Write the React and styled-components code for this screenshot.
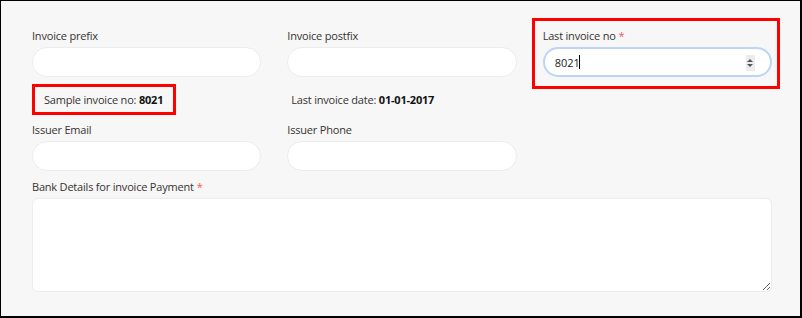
import React from "react";
import styled, { createGlobalStyle } from "styled-components";

const Global = createGlobalStyle`
  html, body { margin: 0; padding: 0; background: #ffffff; }
  * { box-sizing: border-box; }
`;

const Frame = styled.div`
  width: 802px;
  height: 318px;
  border: 1px solid #000;
  border-right-width: 2px;
  border-bottom-width: 2px;
  background: #f7f7f7;
  padding: 28px 0 0 31px;
  font-family: "Open Sans", "Noto Sans", sans-serif;
  font-size: 11px;
  color: #3b3b3b;
`;

const Form = styled.div`
  width: 740px;
  display: flex;
  flex-direction: column;
`;

const Row = styled.div`
  display: grid;
  grid-template-columns: repeat(3, 1fr);
  column-gap: 26px;
  margin-top: ${(p) => p.$top || 0}px;
`;

const Field = styled.div`
  position: relative;
  display: flex;
  flex-direction: column;
  gap: 4px;
  ${(p) =>
    p.$marked &&
    `
    &::after {
      content: "";
      position: absolute;
      top: -11px;
      left: -11px;
      right: -8px;
      bottom: -12px;
      border: 3px solid #ff0000;
      pointer-events: none;
    }
  `}
`;

const Label = styled.label`
  display: block;
  height: 14px;
  line-height: 14px;
  font-size: 11px;
  letter-spacing: -0.2px;
  color: #36332f;
  white-space: nowrap;
`;

const Req = styled.span`
  color: #f25a5a;
  margin-left: 3px;
`;

const TextInput = styled.input`
  width: 100%;
  height: 30px;
  border: 1px solid #ececec;
  border-radius: 15px;
  background: #fff;
  outline: none;
  padding: 0 14px;
  font-family: inherit;
  font-size: 11px;
  color: #222;
  ${(p) =>
    p.$focused &&
    `
    border: 2px solid #bcd4f6;
    padding: 0 10px;
  `}
`;

const InputWrap = styled.div`
  position: relative;
  height: 30px;
`;

const Caret = styled.span`
  position: absolute;
  left: 36px;
  top: 8px;
  width: 1px;
  height: 14px;
  background: #000;
`;

const Spinner = styled.span`
  position: absolute;
  right: 17px;
  top: 8px;
  width: 9px;
  height: 16px;
  background: #ececec;
  display: flex;
  flex-direction: column;
  align-items: center;
  justify-content: center;
  gap: 2px;
`;

const Arrow = styled.span`
  width: 0;
  height: 0;
  border-left: 3px solid transparent;
  border-right: 3px solid transparent;
  ${(p) =>
    p.$down
      ? "border-top: 3px solid #555;"
      : "border-bottom: 3px solid #555;"}
`;

const SampleBox = styled.div`
  justify-self: start;
  border: 3px solid #ff0000;
  padding: 0 10px 0 9px;
  height: 31px;
  display: flex;
  align-items: center;
  letter-spacing: -0.2px;
  color: #36332f;
  white-space: nowrap;
`;

const Info = styled.div`
  align-self: center;
  padding-left: 4px;
  letter-spacing: -0.2px;
  color: #36332f;
  white-space: nowrap;
`;

const Strong = styled.b`
  font-weight: 700;
  color: #111;
`;

const BankField = styled.div`
  margin-top: 9px;
  display: flex;
  flex-direction: column;
  gap: 4px;
`;

const TextArea = styled.textarea`
  width: 100%;
  height: 94px;
  border: 1px solid #ececec;
  border-radius: 6px;
  background: #fff;
  outline: none;
  resize: both;
  font-family: inherit;
  font-size: 11px;
  display: block;
`;

export default function App() {
  return (
    <>
      <Global />
      <Frame>
        <Form>
          <Row>
            <Field>
              <Label>Invoice prefix</Label>
              <TextInput type="text" />
            </Field>
            <Field>
              <Label>Invoice postfix</Label>
              <TextInput type="text" />
            </Field>
            <Field $marked>
              <Label>
                Last invoice no<Req>*</Req>
              </Label>
              <InputWrap>
                <TextInput type="text" $focused defaultValue="8021" readOnly />
                <Caret />
                <Spinner>
                  <Arrow />
                  <Arrow $down />
                </Spinner>
              </InputWrap>
            </Field>
          </Row>
          <Row $top={7}>
            <SampleBox>
              Sample invoice no:&nbsp;<Strong>8021</Strong>
            </SampleBox>
            <Info>
              Last invoice date: <Strong>01-01-2017</Strong>
            </Info>
          </Row>
          <Row $top={8}>
            <Field>
              <Label>Issuer Email</Label>
              <TextInput type="text" />
            </Field>
            <Field>
              <Label>Issuer Phone</Label>
              <TextInput type="text" />
            </Field>
          </Row>
          <BankField>
            <Label>
              Bank Details for invoice Payment<Req>*</Req>
            </Label>
            <TextArea />
          </BankField>
        </Form>
      </Frame>
    </>
  );
}
